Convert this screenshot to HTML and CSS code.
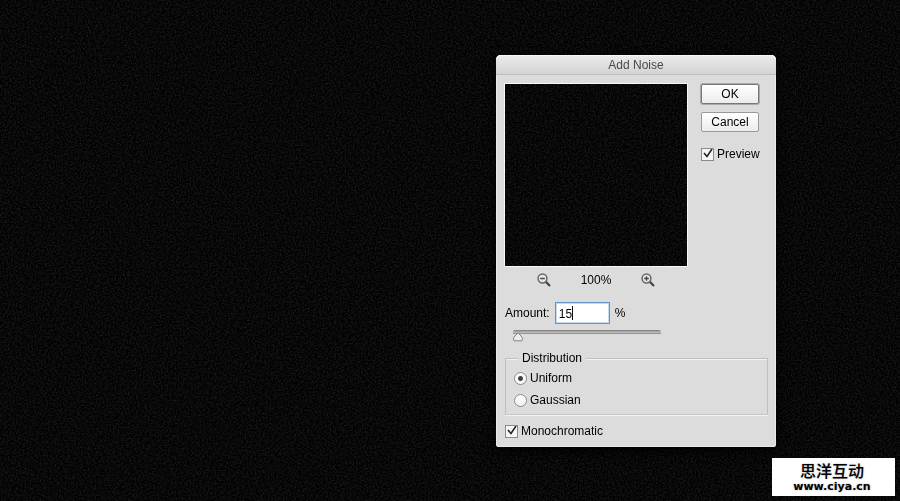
FILE: index.html
```html
<!DOCTYPE html>
<html lang="en">
<head>
<meta charset="utf-8">
<title>Add Noise</title>
<link rel="stylesheet" href="styles.css">
</head>
<body>
<svg class="canvas" aria-hidden="true">
  <filter id="grain" x="0" y="0" width="100%" height="100%" color-interpolation-filters="sRGB">
    <feTurbulence type="fractalNoise" baseFrequency="0.6" numOctaves="2" seed="4"/>
    <feColorMatrix values="0.2 0 0 0 -0.066  0.2 0 0 0 -0.066  0.2 0 0 0 -0.066  0 0 0 0 1"/>
  </filter>
  <rect width="100%" height="100%" filter="url(#grain)"/>
</svg>

<form class="dialog" onsubmit="return false">
  <h1 class="title">Add Noise</h1>
  <div class="body">
    <div class="top">
      <div class="viewer">
        <svg class="preview" aria-hidden="true"><rect width="100%" height="100%" filter="url(#grain)"/></svg>
        <div class="zoom">
          <button class="icon" type="button" aria-label="Zoom out">
            <svg viewBox="0 0 14 14"><circle cx="5.500" cy="5.500" r="4.400" fill="#e6e6e6" stroke="#666" stroke-width="1.500"/><path d="M3.200 5.500h4.600" stroke="#444" stroke-width="1.500"/><path d="M8.800 8.800l4.200 4.200" stroke="#444" stroke-width="2.200"/></svg>
          </button>
          <output>100%</output>
          <button class="icon" type="button" aria-label="Zoom in">
            <svg viewBox="0 0 14 14"><circle cx="5.500" cy="5.500" r="4.400" fill="#e6e6e6" stroke="#666" stroke-width="1.500"/><path d="M3.200 5.500h4.600M5.500 3.200v4.600" stroke="#444" stroke-width="1.300"/><path d="M8.800 8.800l4.200 4.200" stroke="#444" stroke-width="2.200"/></svg>
          </button>
        </div>
      </div>
      <div class="actions">
        <button class="push default" type="submit">OK</button>
        <button class="push" type="button">Cancel</button>
        <label class="choice"><input type="checkbox" checked>Preview</label>
      </div>
    </div>
    <div class="amount">
      <label for="amount">Amount:</label>
      <span class="field"><input id="amount" type="text" value="15"><i class="caret"></i></span>
      <span>%</span>
    </div>
    <input class="slider" type="range" min="0" max="400" value="0" aria-label="Amount">
    <fieldset class="group">
      <legend>Distribution</legend>
      <label class="choice"><input type="radio" name="dist" checked>Uniform</label>
      <label class="choice"><input type="radio" name="dist">Gaussian</label>
    </fieldset>
    <label class="choice"><input type="checkbox" checked>Monochromatic</label>
  </div>
</form>

<div class="watermark">
  <span class="brand">思洋互动</span>
  <span class="site">www.ciya.cn</span>
</div>
</body>
</html>
```
FILE: styles.css
```css
* {
  box-sizing: border-box;
}

body {
  margin: 0;
  min-height: 100vh;
  overflow: hidden;
  background: #080808;
  color: #000;
  font: 12px/16px "Liberation Sans", Arial, sans-serif;
}

input,
button {
  margin: 0;
  font: inherit;
  color: inherit;
}

.canvas {
  position: fixed;
  inset: 0;
  width: 100%;
  height: 100%;
}

/* Dialog window */
.dialog {
  position: absolute;
  top: 55px;
  left: 496px;
  width: 280px;
  border-radius: 5px 5px 3px 3px;
  background: #dcdcdc;
  box-shadow: inset 0 0 0 1px #e9e9e9, 0 3px 12px #000;
}

.title {
  margin: 0;
  height: 20px;
  border-bottom: 1px solid #c0c0c0;
  border-radius: 5px 5px 0 0;
  background: linear-gradient(#ececec, #d3d3d3);
  box-shadow: inset 0 1px #f8f8f8;
  color: #484848;
  font-size: 12px;
  font-weight: normal;
  line-height: 20px;
  text-align: center;
}

.body {
  padding: 8px;
}

.top {
  display: flex;
  gap: 13px;
}

.viewer {
  width: 184px;
}

.preview {
  display: block;
  width: 100%;
  height: 184px;
  border: 1px solid #f8f8f8;
  background: #050505;
}

.zoom {
  display: flex;
  align-items: center;
  justify-content: space-between;
  height: 26px;
  padding: 0 33px;
}

.icon {
  width: 14px;
  height: 14px;
  padding: 0;
  border: 0;
  background: none;
}

.icon svg {
  display: block;
  width: 14px;
  height: 14px;
  fill: none;
}

.actions {
  display: flex;
  flex-direction: column;
  align-items: flex-start;
  gap: 8px;
  padding-top: 1px;
}

.push {
  width: 58px;
  height: 20px;
  padding: 0;
  border: 1px solid #999;
  border-radius: 2px;
  background: linear-gradient(#fff, #ececec);
  line-height: 18px;
}

.default {
  border-color: #777;
  box-shadow: 0 0 0 1px #aaa;
}

.actions .choice {
  margin-top: 6px;
}

/* Tick boxes and radios */
.choice {
  display: flex;
  align-items: center;
  gap: 3px;
  height: 16px;
}

.choice input {
  flex: none;
  appearance: none;
  width: 13px;
  height: 13px;
  border: 1px solid #8b8b8b;
  background: linear-gradient(#fff, #f0f0f0);
}

.choice input[type="checkbox"]:checked {
  background: #f6f6f6 url("data:image/svg+xml,%3Csvg xmlns='http://www.w3.org/2000/svg' viewBox='0 0 11 11'%3E%3Cpath d='M2 4l3 3.500L10 0' fill='none' stroke='%23222' stroke-width='1.600'/%3E%3C/svg%3E") center / 11px 11px no-repeat;
}

.choice input[type="radio"] {
  border-radius: 50%;
}

.choice input[type="radio"]:checked {
  background: radial-gradient(circle, #444 0 2px, #fafafa 3px);
}

/* Amount */
.amount {
  display: flex;
  align-items: center;
  gap: 5px;
  height: 22px;
  margin: 9px 0 6px 1px;
}

.field {
  position: relative;
}

.field input {
  display: block;
  width: 55px;
  height: 22px;
  padding: 1px 3px 0;
  border: 1px solid #5f93c9;
  outline: 0;
  background: #fff;
  box-shadow: inset 0 0 0 1px #c3dcf3;
}

.caret {
  position: absolute;
  top: 4px;
  left: 17px;
  width: 1px;
  height: 14px;
  background: #111;
}

.slider {
  appearance: none;
  display: block;
  width: 148px;
  height: 13px;
  margin: 0 0 0 9px;
  background: none;
}

.slider::-webkit-slider-runnable-track {
  height: 13px;
  background: linear-gradient(#888 0 1px, #a5a5a5 1px 2px, #bcbcbc 2px 3px, #949494 3px 4px, transparent 4px);
  border-radius: 2px;
}

.slider::-webkit-slider-thumb {
  appearance: none;
  width: 10px;
  height: 10px;
  margin-top: 2px;
  background: url("data:image/svg+xml,%3Csvg xmlns='http://www.w3.org/2000/svg' viewBox='0 0 10 10'%3E%3Cpath d='M5 .7L9.300 5.500V8Q9.300 8.800 8.500 8.800H1.500Q.7 8.800.7 8V5.500Z' fill='%23eee' stroke='%23808080'/%3E%3C/svg%3E") center / 10px 10px no-repeat;
}

/* Distribution */
.group {
  display: flex;
  flex-direction: column;
  gap: 6px;
  min-width: 0;
  margin: 7px 0 8px 1px;
  padding: 4px 8px 6px;
  border: 1px solid #bfbfbf;
  border-bottom-color: #c6c6c6;
  box-shadow: inset 0 1px #f2f2f2, 0 1px #f2f2f2;
}

.group legend {
  margin-left: 4px;
  padding: 0 4px;
  background: #dcdcdc;
}

.body > .choice {
  margin-left: 1px;
}

/* Site mark in the corner */
.watermark {
  position: absolute;
  right: 5px;
  bottom: 5px;
  display: flex;
  flex-direction: column;
  align-items: center;
  width: 123px;
  height: 38px;
  padding: 4px 3px 0 0;
  background: #fff;
  color: #000;
  text-shadow: 0 0 2px #aaa;
}

.brand {
  font: 500 16px/17px "Noto Sans CJK SC", sans-serif;
}

.site {
  font: bold 11px/15px "DejaVu Sans", sans-serif;
}
```
